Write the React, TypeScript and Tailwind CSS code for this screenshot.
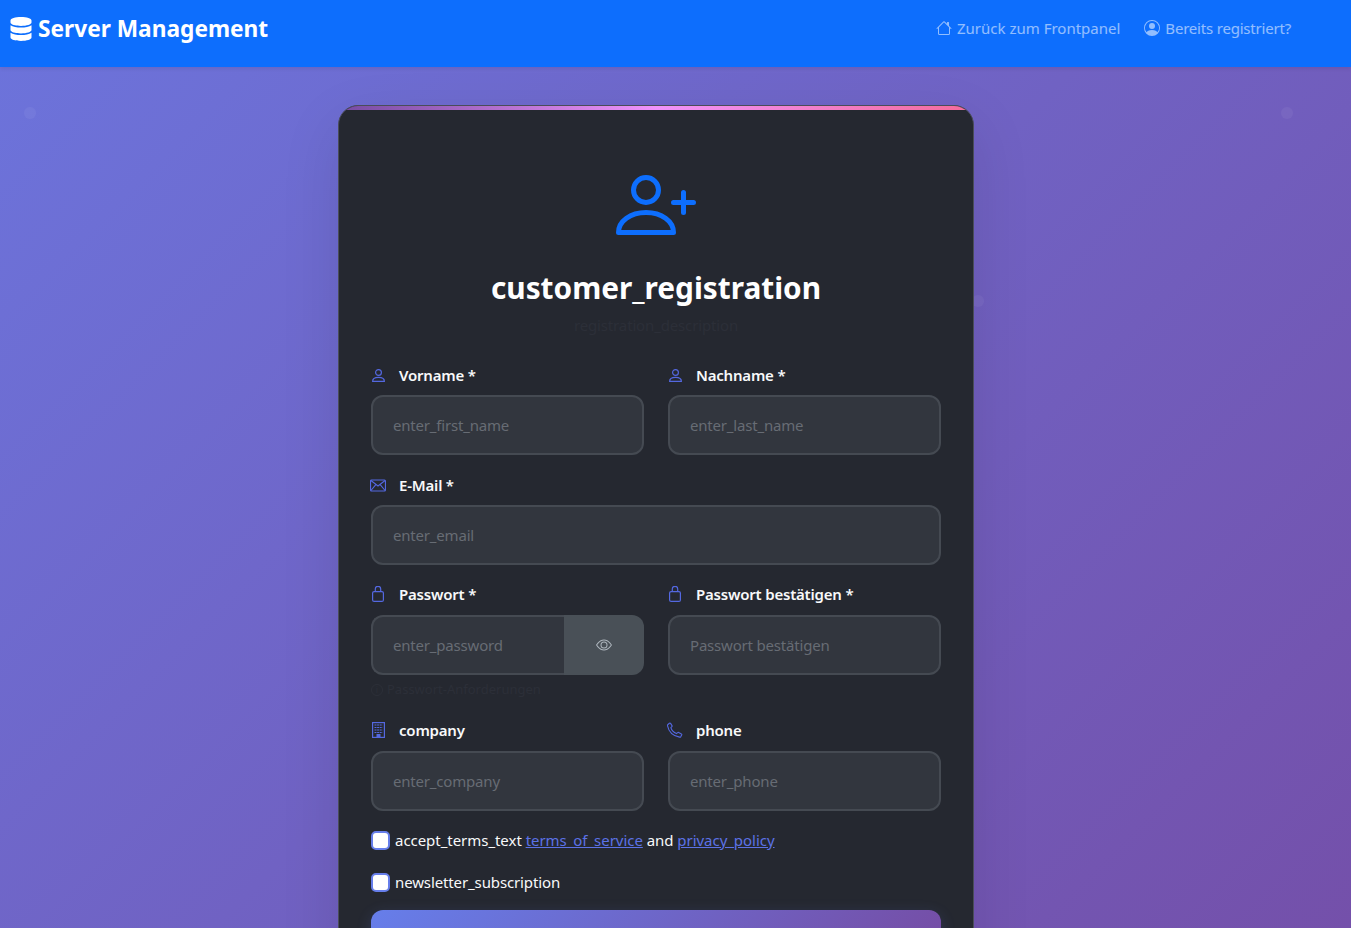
import type { ReactNode } from 'react';
import { BsEye, BsHouse, BsPersonCircle } from 'react-icons/bs';
import { FaDatabase } from 'react-icons/fa';

const font = { fontFamily: '"Noto Sans", "Open Sans", sans-serif' };

function UserIcon() {
  return (
    <svg width="13" height="13" viewBox="0 0 13 13" fill="none" stroke="currentColor" strokeWidth="1.2">
      <circle cx="6.5" cy="3.5" r="2.9" />
      <path d="M.6 12.4c0-2.6 2.6-4 5.900-4s5.900 1.400 5.900 4z" strokeLinejoin="round" />
    </svg>
  );
}

function MailIcon() {
  return (
    <svg width="17" height="13" viewBox="0 0 17 13" fill="none" stroke="currentColor" strokeWidth="1.2">
      <rect x=".6" y=".6" width="15.8" height="11.8" rx="1" />
      <path d="M1 1.200 8.500 7 16 1.200M1 11.800l5.200-6.200M16 11.800l-5.200-6.200" />
    </svg>
  );
}

function LockIcon() {
  return (
    <svg width="12" height="16" viewBox="0 0 12 16" fill="none" stroke="currentColor" strokeWidth="1.2">
      <rect x=".6" y="5.600" width="10.800" height="9.800" rx="1.500" />
      <path d="M3.300 5.500V3a2.700 2.700 0 0 1 5.400 0v2.500" />
    </svg>
  );
}

function BuildingIcon() {
  return (
    <svg width="13" height="16" viewBox="0 0 13 16" fill="none" stroke="currentColor" strokeWidth="1.2">
      <rect x=".6" y=".6" width="11.800" height="14.800" />
      <path d="M2.500 3h8M2.500 5.500h8M2.500 8h8M2.500 10.500h8" strokeDasharray="2 .6" />
      <rect x="4.500" y="12" width="4" height="3.500" fill="currentColor" stroke="none" />
    </svg>
  );
}

function PhoneIcon() {
  return (
    <svg width="17" height="16" viewBox="0 0 17 16" fill="none" stroke="currentColor" strokeWidth="1.2">
      <path
        d="M1 2.200 2.600.8c.4-.3.9-.2 1.200.2l1.500 2.300c.2.400.2.800-.1 1.100L4.100 5.500c.8 2.800 3 5.100 6 6.300l1.200-1c.3-.3.8-.3 1.100-.1l2.900 1.600c.4.200.5.700.3 1.100l-.9 1.600c-.3.500-.9.700-1.400.6C6.500 14.400 1.700 9.500.5 3.300.4 2.900.6 2.500 1 2.200z"
        strokeLinejoin="round"
      />
    </svg>
  );
}

function UserPlusIcon() {
  return (
    <svg width="80" height="60" viewBox="0 0 80 60" fill="none" stroke="#0d6efd" strokeWidth="5" strokeLinecap="round" strokeLinejoin="round">
      <circle cx="30" cy="15" r="12.500" />
      <path d="M2.500 57.500C2.500 46 14.500 37.500 30 37.500S57.500 46 57.500 57.500z" />
      <path d="M57.500 27.500h20M67.500 17.500v20" />
    </svg>
  );
}

function FieldLabel({ icon, children, className = 'mb-[10px]' }: { icon: ReactNode; children: ReactNode; className?: string }) {
  return (
    <label className={`flex h-5 items-center text-[15px] font-semibold tracking-[-0.2px] text-[#f8f9fa] ${className}`}>
      <span className="-ml-px mr-[13px] flex w-4 shrink-0 justify-center text-[#5468e0]">{icon}</span>
      {children}
    </label>
  );
}

function Field({
  icon,
  label,
  placeholder,
  type = 'text',
  className = '',
  labelClassName,
}: {
  icon: ReactNode;
  label: string;
  placeholder: string;
  type?: string;
  className?: string;
  labelClassName?: string;
}) {
  return (
    <div className={className}>
      <FieldLabel icon={icon} className={labelClassName}>
        {label}
      </FieldLabel>
      <input
        type={type}
        placeholder={placeholder}
        className="h-[60px] w-full rounded-xl border-2 border-[#454a52] bg-[#32363e] px-5 text-[15px] tracking-[-0.19px] text-white placeholder-[#676c74] outline-none"
      />
    </div>
  );
}

function Dot({ className }: { className: string }) {
  return <div className={`absolute h-3 w-3 rounded-full bg-white/5 ${className}`} />;
}

export default function App() {
  return (
    <div
      style={font}
      className="relative h-screen overflow-hidden bg-[linear-gradient(135deg,#6c74dc_0%,#7450aa_100%)]"
    >
      <Dot className="left-6 top-[107px]" />
      <Dot className="left-[1281px] top-[107px]" />
      <Dot className="left-[972px] top-[295px]" />

      {/* Navbar */}
      <nav className="relative flex h-[67px] items-start justify-between bg-[#0d6efd] pl-[9px] pr-[60px] pt-[14px] shadow-[0_2px_4px_rgba(0,0,0,0.08)]">
        <a className="flex items-center text-[22.7px] font-bold leading-[30px] text-white">
          <FaDatabase size={24} className="mr-[5px]" />
          Server Management
        </a>
        <div className="flex items-center gap-6 pt-[2px] text-[15px] leading-6 text-white/55">
          <a className="flex items-center gap-[5px]">
            <BsHouse size={16} />
            Zurück zum Frontpanel
          </a>
          <a className="flex items-center gap-[5px] tracking-[-0.2px]">
            <BsPersonCircle size={16} />
            Bereits registriert?
          </a>
        </div>
      </nav>

      {/* Registration card */}
      <main className="flex justify-center pr-[39px] pt-[38px]">
        <div className="relative w-[636px] overflow-hidden rounded-[20px] border border-[#4a4d59] bg-[#252830] px-8 pb-10 pt-[69px] shadow-[0_20px_60px_rgba(0,0,0,0.1)]">
          <div className="absolute inset-x-0 top-0 h-1 bg-[linear-gradient(90deg,#764ba2,#f093fb,#f46b9a)]" />

          <div className="flex flex-col items-center">
            <UserPlusIcon />
            <h1 className="mt-8 text-[29.8px] font-bold leading-[42px] text-white">customer_registration</h1>
            <p className="mt-1 text-[15px] leading-6 tracking-[-0.15px] text-[#2c2f38]">registration_description</p>
          </div>

          <form className="mt-[28px]">
            <div className="grid grid-cols-2 gap-6">
              <Field icon={<UserIcon />} label="Vorname *" placeholder="enter_first_name" />
              <Field icon={<UserIcon />} label="Nachname *" placeholder="enter_last_name" />
            </div>

            <Field className="mt-5" icon={<MailIcon />} label="E-Mail *" placeholder="enter_email" type="email" />

            <div className="mt-[19px] grid grid-cols-2 gap-6">
              <div>
                <FieldLabel icon={<LockIcon />} className="mb-[11px]">
                  Passwort *
                </FieldLabel>
                <div className="flex h-[60px]">
                  <input
                    type="password"
                    placeholder="enter_password"
                    className="min-w-0 flex-1 rounded-l-xl border-2 border-r-0 border-[#454a52] bg-[#32363e] px-5 text-[15px] tracking-[-0.19px] text-white placeholder-[#676c74] outline-none"
                  />
                  <button type="button" className="flex w-[80px] items-center justify-center rounded-r-xl bg-[#495057] text-[#adb5bd]">
                    <BsEye size={16} />
                  </button>
                </div>
                <div className="mt-[5px] flex h-5 items-center gap-1 text-[13px] text-[#2c2f38]">
                  <span className="flex h-3 w-3 items-center justify-center rounded-full border border-current text-[9px]">i</span>
                  Passwort-Anforderungen
                </div>
              </div>
              <Field icon={<LockIcon />} label="Passwort bestätigen *" placeholder="Passwort bestätigen" type="password" labelClassName="mb-[11px]" />
            </div>

            <div className="mt-5 grid grid-cols-2 gap-6">
              <Field icon={<BuildingIcon />} label="company" placeholder="enter_company" labelClassName="mb-[11px]" />
              <Field icon={<PhoneIcon />} label="phone" placeholder="enter_phone" labelClassName="mb-[11px]" />
            </div>

            <label className="mt-[17px] flex h-6 items-center text-[15px] tracking-[-0.04px] text-[#f8f9fa]">
              <span className="mr-[5px] h-[19px] w-[19px] rounded-[5px] border-2 border-[#667eea] bg-white" />
              <span>
                accept_terms_text <a className="text-[#5c72e6] underline">terms_of_service</a> and{' '}
                <a className="text-[#5c72e6] underline">privacy_policy</a>
              </span>
            </label>

            <label className="mt-[18px] flex h-6 items-center text-[15px] tracking-[-0.12px] text-[#f8f9fa]">
              <span className="mr-[5px] h-[19px] w-[19px] rounded-[5px] border-2 border-[#667eea] bg-white" />
              newsletter_subscription
            </label>

            <button
              type="submit"
              aria-label="Registrieren"
              className="mt-4 block h-14 w-full rounded-xl bg-[linear-gradient(135deg,#667eea,#764ba2)] shadow-[0_4px_15px_rgba(102,126,234,0.2)]"
            />
          </form>
        </div>
      </main>
    </div>
  );
}
